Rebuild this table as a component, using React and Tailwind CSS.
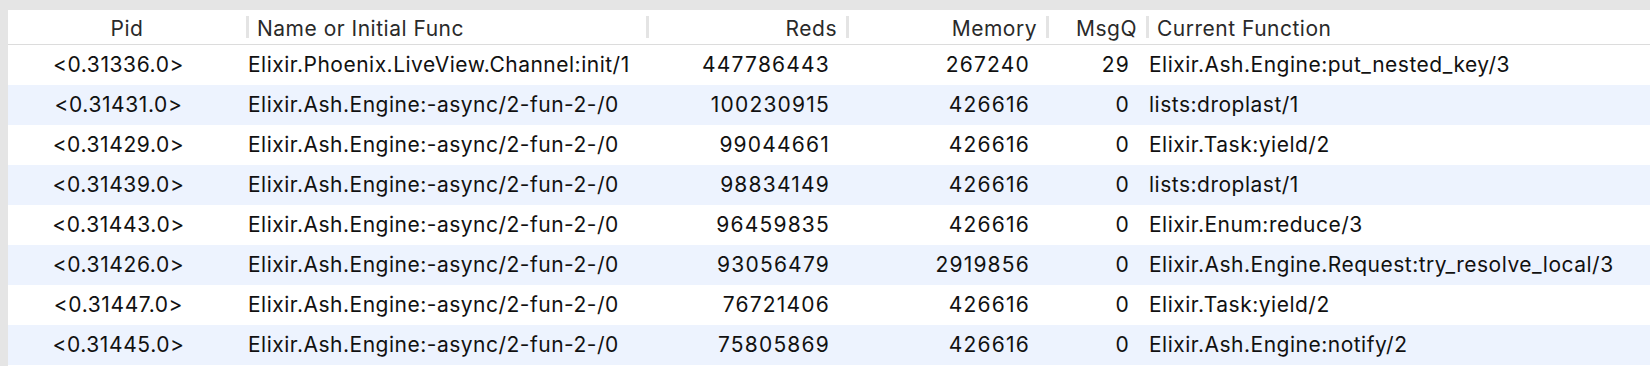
const rows = [
  ['<0.31336.0>', 'Elixir.Phoenix.LiveView.Channel:init/1', '447786443', '267240', '29', 'Elixir.Ash.Engine:put_nested_key/3'],
  ['<0.31431.0>', 'Elixir.Ash.Engine:-async/2-fun-2-/0', '100230915', '426616', '0', 'lists:droplast/1'],
  ['<0.31429.0>', 'Elixir.Ash.Engine:-async/2-fun-2-/0', '99044661', '426616', '0', 'Elixir.Task:yield/2'],
  ['<0.31439.0>', 'Elixir.Ash.Engine:-async/2-fun-2-/0', '98834149', '426616', '0', 'lists:droplast/1'],
  ['<0.31443.0>', 'Elixir.Ash.Engine:-async/2-fun-2-/0', '96459835', '426616', '0', 'Elixir.Enum:reduce/3'],
  ['<0.31426.0>', 'Elixir.Ash.Engine:-async/2-fun-2-/0', '93056479', '2919856', '0', 'Elixir.Ash.Engine.Request:try_resolve_local/3'],
  ['<0.31447.0>', 'Elixir.Ash.Engine:-async/2-fun-2-/0', '76721406', '426616', '0', 'Elixir.Task:yield/2'],
  ['<0.31445.0>', 'Elixir.Ash.Engine:-async/2-fun-2-/0', '75805869', '426616', '0', 'Elixir.Ash.Engine:notify/2'],
];

const cols = 'grid grid-cols-[238px_400px_200px_200px_100px_1fr]';

function HeadCell({ children, align = 'left', sep = true }) {
  return (
    <div className="flex items-center h-full">
      {sep && <div className="w-[3px] h-[22px] bg-[#e4e4e4] shrink-0" />}
      <div
        className={
          align === 'right'
            ? 'flex-1 text-right pr-[9px] pt-[3px]'
            : align === 'center'
            ? 'flex-1 text-center pt-[3px]'
            : 'flex-1 text-left pl-[8px] pt-[3px]'
        }
      >
        {children}
      </div>
    </div>
  );
}

export default function App() {
  return (
    <div
      className="w-[1650px] h-[366px] bg-[#e5e5e5] pt-[10px] pl-[8px] overflow-hidden"
      style={{ fontFamily: 'Inter, "Liberation Sans", sans-serif' }}
    >
      <div className="bg-white h-full">
        {/* Column headers */}
        <div className={`${cols} h-[35px] border-b border-[#dcdcdc] text-[21px] tracking-[0.5px] text-[#2a2a2a]`}>
          <HeadCell align="center" sep={false}>Pid</HeadCell>
          <HeadCell>Name or Initial Func</HeadCell>
          <HeadCell align="right">Reds</HeadCell>
          <HeadCell align="right">Memory</HeadCell>
          <HeadCell align="right">MsgQ</HeadCell>
          <HeadCell>Current Function</HeadCell>
        </div>

        {/* Process rows */}
        {rows.map((r, i) => (
          <div
            key={r[0]}
            className={`${cols} h-[40px] items-center text-[21px] tracking-[0.5px] text-[#111] ${i % 2 ? 'bg-[#edf3fe]' : 'bg-white'}`}
          >
            <div className="text-center pr-[17px] tracking-[0.6px]">{r[0]}</div>
            <div className="pl-[2px] whitespace-nowrap">{r[1]}</div>
            <div className="text-right pr-[16px] tracking-[1.2px]">{r[2]}</div>
            <div className="text-right pr-[16px] tracking-[1.2px]">{r[3]}</div>
            <div className="text-right pr-[16px] tracking-[1.2px]">{r[4]}</div>
            <div className="pl-[3px] whitespace-nowrap">{r[5]}</div>
          </div>
        ))}
      </div>
    </div>
  );
}
